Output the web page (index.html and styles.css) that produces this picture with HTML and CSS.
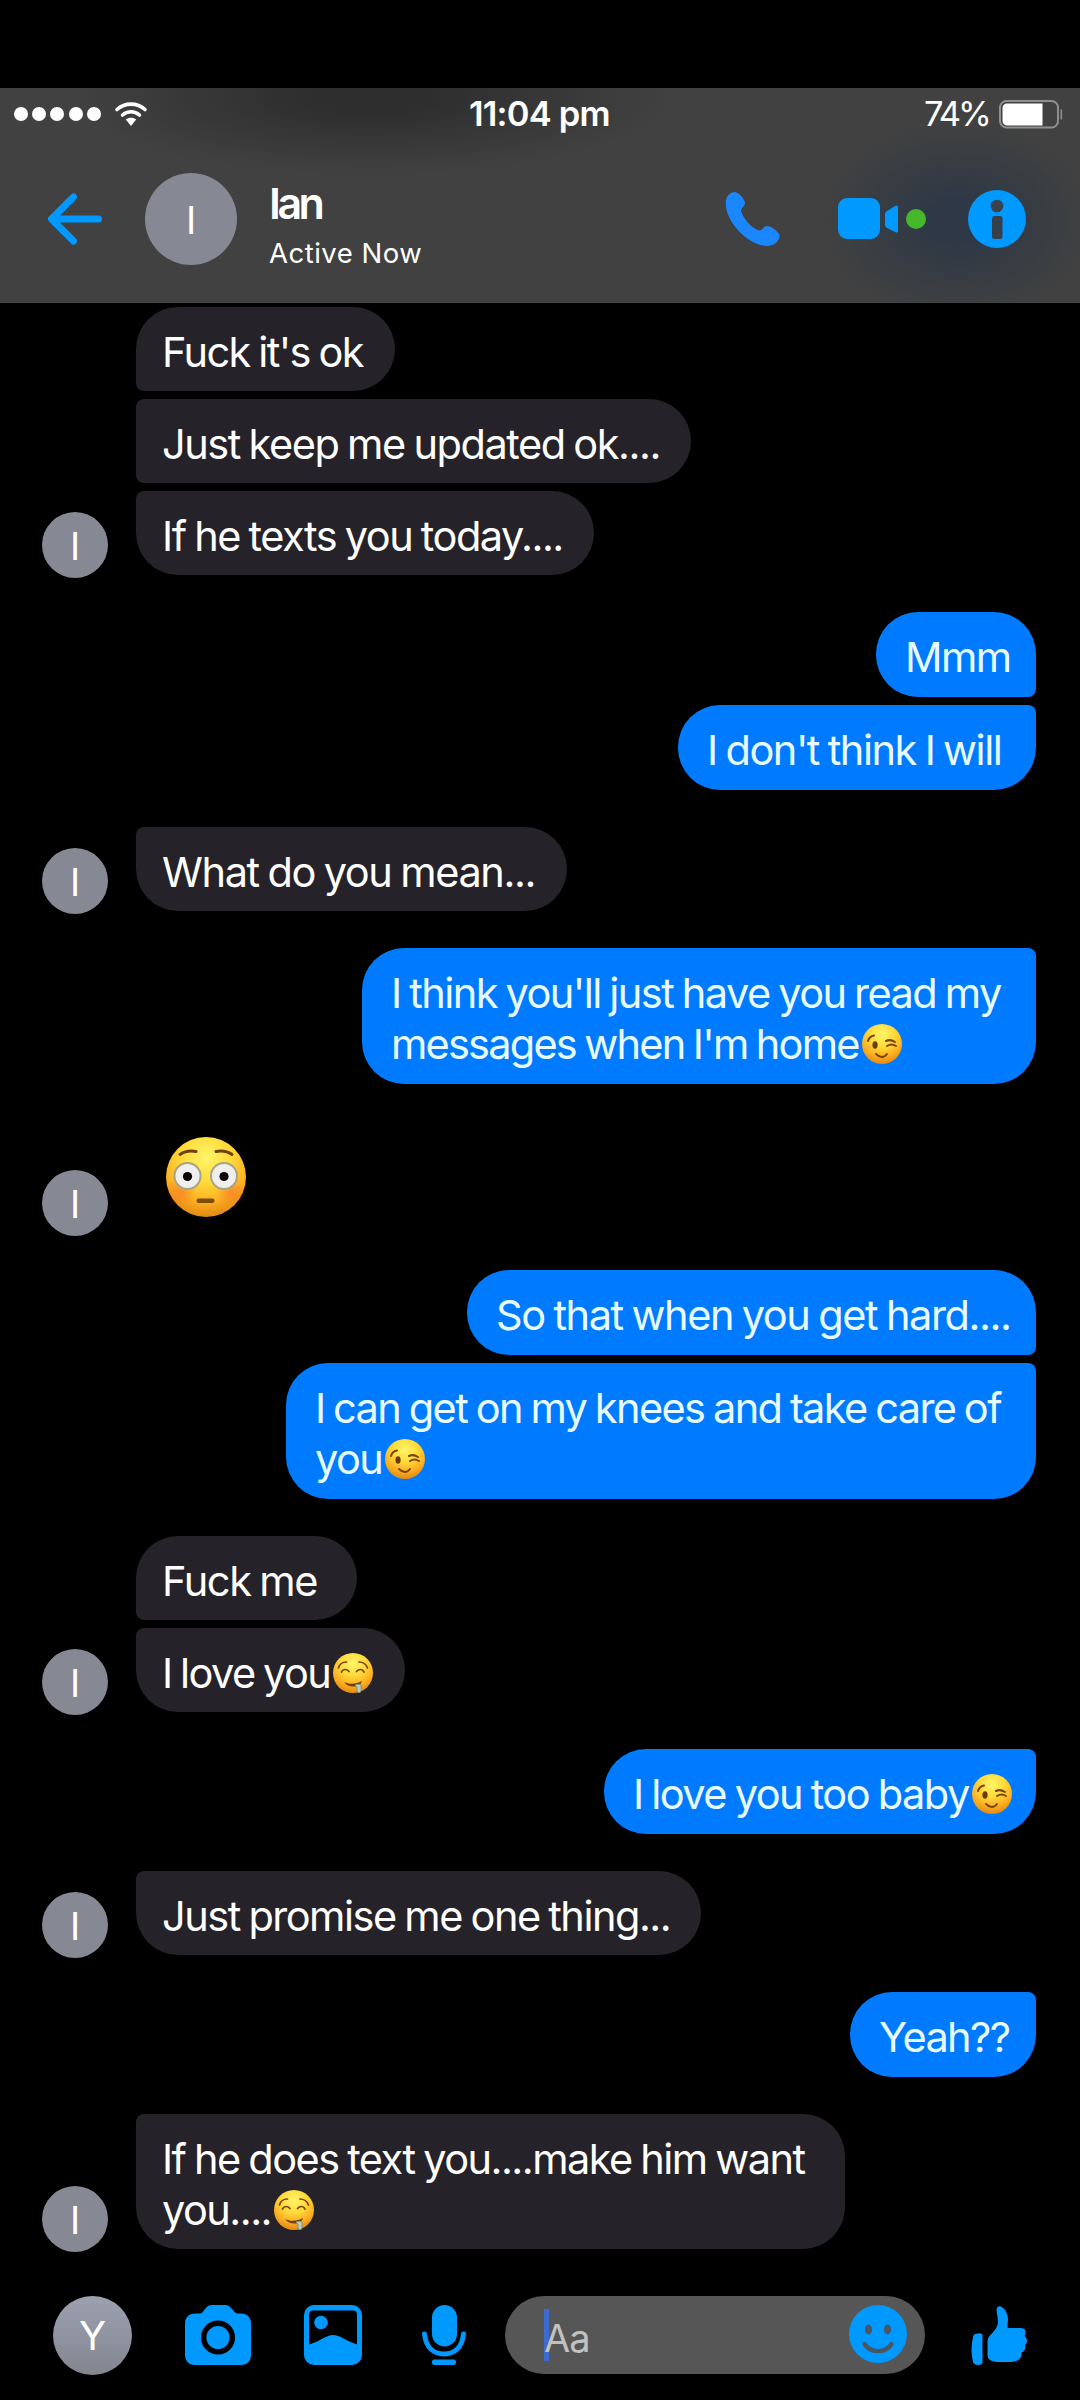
FILE: index.html
```html
<!DOCTYPE html>
<html lang="en">
<head>
<meta charset="utf-8">
<title>Ian</title>
<link rel="stylesheet" href="styles.css">
</head>
<body>
<svg class="defs" width="0" height="0" aria-hidden="true">
  <defs>
    <radialGradient id="face" cx="50%" cy="26%" r="76%">
      <stop offset="0" stop-color="#fff56a"/><stop offset=".4" stop-color="#ffdb3a"/><stop offset=".72" stop-color="#fcb022"/><stop offset="1" stop-color="#e08512"/>
    </radialGradient>
    <radialGradient id="blush"><stop offset="0" stop-color="#f8662a" stop-opacity=".5"/><stop offset="1" stop-color="#f8662a" stop-opacity="0"/></radialGradient>
    <symbol id="wink" viewBox="0 0 40 40">
      <circle cx="20" cy="20" r="20" fill="url(#face)"/>
      <g fill="none" stroke="#7a4408" stroke-width="2" stroke-linecap="round">
        <path d="M6 17c1-3.500 3-5 6-5.500M24 17c3-1.500 6-1 9 1M25 22c3-2 6-2 9 0M14 30c4 4 8 4 11 0"/>
      </g>
      <ellipse cx="13" cy="21" rx="2.600" ry="3.700" fill="#6b3a07"/>
    </symbol>
    <symbol id="drool" viewBox="0 0 40 40">
      <circle cx="20" cy="20" r="20" fill="url(#face)"/>
      <g fill="none" stroke="#7a4408" stroke-width="1.700" stroke-linecap="round">
        <path d="M5.500 15c1-4 4-6 8-6M26 9c4 0 7 2 8.500 6M8.500 19c1.500-3 5-3.500 7.500-.5M23.500 18.500c2.500-3 6-2.500 7.500.5"/>
      </g>
      <path d="M11 29c5 2.500 12 2.500 18-1-1 4-4.500 5.500-8.500 5.500s-7.500-1.500-9.500-4.500z" fill="#74400a"/>
      <path d="M22 32c2-1 5-1 6 0v5c0 4-4 3.500-4 0v-3z" fill="#b9cdbd" stroke="#6f8f83" stroke-width=".8"/>
    </symbol>
    <symbol id="flushed" viewBox="0 0 80 80">
      <circle cx="40" cy="40" r="40" fill="url(#face)"/>
      <circle cx="15" cy="55" r="15" fill="url(#blush)"/><circle cx="65" cy="55" r="15" fill="url(#blush)"/>
      <g fill="#efefed" stroke="#a7a488" stroke-width="2"><circle cx="21.500" cy="39" r="13"/><circle cx="58" cy="39" r="13"/></g>
      <circle cx="21.500" cy="39.500" r="4.600" fill="#0a0500"/><circle cx="58" cy="39.500" r="4.600" fill="#0a0500"/>
      <path d="M14 17.500c5-3.500 11-4 16-3M66 17.500c-5-3.500-11-4-16-3" fill="none" stroke="#6e4309" stroke-width="3" stroke-linecap="round"/>
      <rect x="30.500" y="61.500" width="18" height="4.500" rx="2.200" fill="#7d4b0a"/>
    </symbol>
  </defs>
</svg>
<header class="header">
  <div class="status">
    <div class="signal"><i></i><i></i><i></i><i></i><i></i></div>
    <svg class="wifi" viewBox="0 0 32 24"><g fill="none" stroke="#fff" stroke-width="3.600" stroke-linecap="round"><path d="M2 7.500C10 .3 22 .3 30 7.500"/><path d="M7.500 13c5-4.300 12-4.300 17 0"/></g><path d="M10.800 17.600c3-2.600 7.400-2.600 10.400 0L16 24z" fill="#fff"/></svg>
    <div class="time">11:04 pm</div>
    <div class="percent">74%</div>
    <svg class="battery" viewBox="0 0 64 29"><rect x="1" y="1" width="58" height="26.500" rx="6.500" fill="none" stroke="#8f8f8f" stroke-width="2"/><path d="M8 3.500h35.500v22H8a4.500 4.500 0 0 1-4.500-4.500V8A4.500 4.500 0 0 1 8 3.500z" fill="#fff"/><path d="M62.300 9.500v10" stroke="#8f8f8f" stroke-width="1.600"/></svg>
  </div>
  <div class="bar">
    <svg class="back" viewBox="0 0 54 52"><path d="M25.500 4L3.500 26l22 22M4 26h46.500" fill="none" stroke="#0099ff" stroke-width="7" stroke-linecap="round" stroke-linejoin="round"/></svg>
    <div class="avatar avatar-lg">I</div>
    <div class="who"><div class="name">Ian</div><div class="active">Active Now</div></div>
    <svg class="phone" viewBox="0 0 54 54"><path d="M0 8C1 3 5 0 9 0c4 .6 9 6.500 10 10.500.4 3-4 5-3.800 9C17 26 26 37 33 38.500c3.500.5 4-4 8-4.500 4 0 11 5 12.500 9 .5 5-4 10-10 10.800C24 56-3 29 0 8z" fill="#1a87ff"/></svg>
    <svg class="video" viewBox="0 0 60 42"><rect x="0" y="0" width="42" height="41" rx="9" fill="#0099ff"/><path d="M47 16q0-2 2-3l8-5q3-1.500 3 1v24q0 2.500-3 1l-8-4q-2-1-2-3z" fill="#0099ff"/></svg>
    <i class="online"></i>
    <svg class="info" viewBox="0 0 58 58"><circle cx="29" cy="29" r="29" fill="#0099ff"/><circle cx="29" cy="16" r="6.300" fill="#3a424b"/><rect x="24" y="26" width="10.500" height="23" rx="2.500" fill="#35404c"/></svg>
  </div>
</header>
<main class="chat">
  <section class="group in">
    <div class="avatar">I</div>
    <div class="stack">
      <p class="bubble m1">Fuck it's ok</p>
      <p class="bubble m2">Just keep me updated ok....</p>
      <p class="bubble m3">If he texts you today....</p>
    </div>
  </section>
  <section class="group out">
    <div class="stack">
      <p class="bubble m4">Mmm</p>
      <p class="bubble m5">I don't think I will</p>
    </div>
  </section>
  <section class="group in">
    <div class="avatar">I</div>
    <div class="stack"><p class="bubble solo m6">What do you mean...</p></div>
  </section>
  <section class="group out">
    <div class="stack"><p class="bubble solo m7">I think you'll just have you read my<br><span class="tight">messages when I'm home</span><svg class="emoji"><use href="#wink"/></svg></p></div>
  </section>
  <section class="group in">
    <div class="avatar">I</div>
    <div class="sticker"><svg class="big-emoji"><use href="#flushed"/></svg></div>
  </section>
  <section class="group out">
    <div class="stack">
      <p class="bubble m8">So that when you get hard....</p>
      <p class="bubble m9">I can get on my knees and take care of<br>you<svg class="emoji"><use href="#wink"/></svg></p>
    </div>
  </section>
  <section class="group in">
    <div class="avatar">I</div>
    <div class="stack">
      <p class="bubble m10">Fuck me</p>
      <p class="bubble m11">I love you<svg class="emoji"><use href="#drool"/></svg></p>
    </div>
  </section>
  <section class="group out">
    <div class="stack"><p class="bubble solo m12">I love you too baby<svg class="emoji"><use href="#wink"/></svg></p></div>
  </section>
  <section class="group in">
    <div class="avatar">I</div>
    <div class="stack"><p class="bubble solo m13">Just promise me one thing...</p></div>
  </section>
  <section class="group out">
    <div class="stack"><p class="bubble solo m14">Yeah??</p></div>
  </section>
  <section class="group in">
    <div class="avatar">I</div>
    <div class="stack"><p class="bubble solo m15">If he does text you....make him want<br>you....<svg class="emoji"><use href="#drool"/></svg></p></div>
  </section>
</main>
<footer class="composer">
  <div class="avatar avatar-me">Y</div>
  <svg class="camera" viewBox="0 0 66 60"><path d="M10 8.500h5c4 0 5-8.500 12-8.500h13c7 0 8 8.500 13 8.500h3c6 0 10 4 10 10V50c0 6-4 10-10 10H10C4 60 0 56 0 50V18.500c0-6 4-10 10-10z" fill="#0099ff"/><circle cx="33" cy="32.500" r="14.300" fill="#0099ff" stroke="#000" stroke-width="5.500"/></svg>
  <svg class="picture" viewBox="0 0 58 60"><rect width="58" height="60" rx="10" fill="#0099ff"/><path d="M9 5.500h40q4 0 4 4V39.500C42 36 36 30 29 30S15 37 5 39.500V9.500q0-4 4-4z" fill="#000"/><circle cx="17" cy="17.500" r="6.800" fill="#0099ff"/></svg>
  <svg class="mic" viewBox="0 0 44 60"><rect x="10" y="0" width="25" height="41.500" rx="12.500" fill="#0099ff"/><path d="M2.500 29C4 43 12 49 22 49s18-6 19.500-20" fill="none" stroke="#0099ff" stroke-width="5" stroke-linecap="round"/><rect x="10" y="54.500" width="24" height="5.500" rx="2.200" fill="#0099ff"/></svg>
  <div class="field">
    <i class="caret"></i><span class="hint">Aa</span>
    <svg class="smile" viewBox="0 0 58 58"><circle cx="29" cy="29" r="29" fill="#0099ff"/><ellipse cx="19.500" cy="24.500" rx="3.600" ry="5" fill="#4a5763"/><ellipse cx="38.500" cy="24.500" rx="3.600" ry="5" fill="#4a5763"/><path d="M15.500 39c6 9.500 21 9.500 27 0" fill="none" stroke="#4a5763" stroke-width="4.400" stroke-linecap="round"/></svg>
  </div>
  <svg class="like" viewBox="0 0 56 59"><path d="M4 28q7-2 7.500 1v27q0 3-4.500 3-4 0-5-3-3-12 0-25 .5-2.500 2-3z" fill="#0099ff"/><path d="M16.500 35c0-6 10-10 10.500-19 .3-6-3-12-.5-15 4-3 10.500 5 10.500 12 0 4-1 6-.5 9h12c6 0 7.500 3 5 8 3.500 3.500 3 6.500.5 9 1 4.500-.5 6-3.500 7.500.5 7-4 9.500-13 9.500-6 .2-12 0-16-.8-3-.7-5-3.200-5-6.200z" fill="#0099ff"/></svg>
</footer>
</body>
</html>
```

FILE: styles.css
```css
* { box-sizing: border-box; }
body { margin: 0; width: 1080px; height: 2400px; padding-top: 88px; overflow: hidden; background: #000; color: #fff; font-family: Inter, "Liberation Sans", sans-serif; display: flex; flex-direction: column; }
svg { display: block; flex: none; overflow: visible; }
.defs { position: absolute; }
i { display: block; flex: none; }

.header { height: 215px; flex: none; background:
  radial-gradient(ellipse 135px 100px at 957px 133px, #2e3846 20%, rgba(50, 58, 68, .6) 60%, transparent),
  radial-gradient(ellipse 300px 78px at 370px 8px, #2e2e2e 20%, transparent),
  #414141; }
.status { height: 54px; display: flex; align-items: center; padding: 0 17px 2px 14px; }
.signal { display: flex; gap: 4.200px; width: 101px; }
.signal i { width: 14px; height: 14px; border-radius: 50%; background: #fff; }
.wifi { width: 32px; height: 24px; }
.time { width: 150px; margin-left: 322px; font-size: 34.500px; line-height: 50px; font-weight: 600; letter-spacing: -.8px; white-space: nowrap; }
.percent { margin-left: auto; margin-right: 10px; font-size: 34.500px; line-height: 50px; letter-spacing: -2.900px; }
.battery { width: 64px; height: 29px; }
.bar { height: 154px; display: flex; align-items: center; padding: 0 54px 0 48px; }
.back { width: 54px; height: 52px; margin-right: 43px; }
.avatar { width: 66px; height: 66px; flex: none; border-radius: 50%; background: #868993; display: flex; align-items: center; justify-content: center; font-size: 38px; line-height: 1; padding-top: 2px; }
.avatar-lg { width: 92px; height: 92px; padding-top: 1px; }
.who { width: 422px; margin-left: 32px; padding-top: 11px; }
.name { font-size: 43px; line-height: 50px; font-weight: 600; letter-spacing: -3.500px; }
.active { font-size: 27.500px; line-height: 36px; padding-top: 7px; letter-spacing: .5px; }
.phone { width: 54px; height: 54px; margin-left: 35px; }
.video { width: 60px; height: 42px; margin-left: 58px; }
.online { width: 20px; height: 20px; margin-left: 8px; border-radius: 50%; background: #45b82c; }
.info { width: 58px; height: 58px; margin-left: auto; }

.chat { display: flex; flex-direction: column; gap: 37px; padding: 4px 44px 0 42px; flex: none; }
.group { display: flex; }
.in { align-items: flex-end; gap: 28px; }
.in > .avatar { margin-bottom: -3px; }
.out { justify-content: flex-end; }
.stack { display: flex; flex-direction: column; gap: 8px; align-items: flex-start; }
.out .stack { align-items: flex-end; }
.bubble { margin: 0; font-size: 41.500px; line-height: 51px; letter-spacing: -1.600px; word-spacing: -1.500px; white-space: nowrap; padding: 20px 0 13px 26px; background: #252329; border-radius: 8px 42px 42px 42px; }
.in .bubble:first-child:not(.solo) { border-radius: 42px 42px 42px 8px; }
.in .bubble:nth-child(2):not(:last-child) { border-radius: 8px 42px 42px 8px; }
.out .bubble { padding: 20px 0 14px 29px; background: #007bff; color: #e8fbff; border-radius: 42px 8px 42px 42px; }
.out .bubble:first-child:not(.solo) { border-radius: 42px 42px 8px 42px; }
.tight { letter-spacing: -1.780px; }
.emoji { display: inline-block; width: 40px; height: 40px; margin: 0 1px 0 3px; vertical-align: -5px; }
.sticker { height: 112px; padding: 16px 0 0 30px; }
.big-emoji { width: 80px; height: 80px; }

.m1 { width: 259px; }
.m2 { width: 555px; letter-spacing: -1.460px; }
.m3 { width: 458px; letter-spacing: -1.500px; }
.m4 { width: 160px; }
.m5 { width: 358px; letter-spacing: -1.450px; }
.m6 { width: 431px; letter-spacing: -1.400px; }
.m7 { width: 674px; letter-spacing: -1.550px; }
.m8 { width: 569px; letter-spacing: -1.420px; }
.m9 { width: 750px; letter-spacing: -1.610px; }
.m10 { width: 221px; letter-spacing: -1.400px; }
.m11 { width: 269px; }
.m12 { width: 432px; letter-spacing: -1.520px; }
.m13 { width: 565px; letter-spacing: -1.500px; }
.m14 { width: 186px; letter-spacing: -1.600px; }
.m15 { width: 709px; letter-spacing: -1.540px; }

.composer { margin-top: auto; height: 126px; flex: none; display: flex; align-items: center; padding: 0 53px 4px; }
.avatar-me { width: 79px; height: 79px; background: linear-gradient(#9ca1b1, #83868f); font-size: 40px; }
.camera { width: 66px; height: 60px; margin-left: 53px; }
.picture { width: 58px; height: 60px; margin-left: 53px; }
.mic { width: 44px; height: 60px; margin-left: 60px; }
.field { width: 420px; height: 78px; margin-left: 39px; border-radius: 39px; background: #565657; display: flex; align-items: center; padding: 0 18px 0 39px; }
.caret { width: 5px; height: 52px; background: #3c6bd0; }
.hint { margin-left: -5px; padding-top: 6px; font-size: 38px; line-height: 48px; color: #c2c2c2; letter-spacing: -1px; }
.smile { width: 58px; height: 58px; margin-left: auto; margin-top: -2px; }
.like { width: 56px; height: 59px; margin-left: auto; }
```
